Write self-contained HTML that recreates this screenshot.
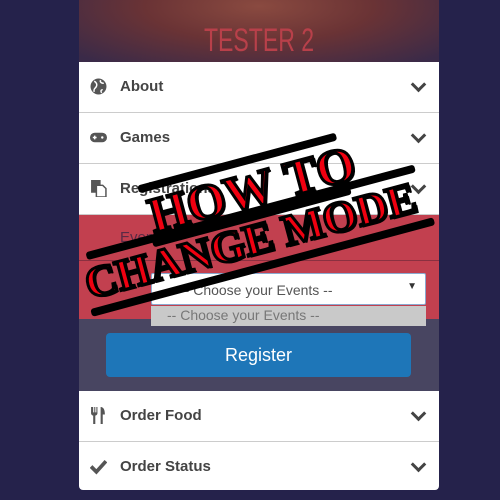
<!DOCTYPE html><html><head><style>
body{margin:0;width:500px;height:500px;background:#25224b;font-family:"Liberation Sans",sans-serif;position:relative;overflow:hidden}
.card{position:absolute;left:79px;top:0;width:360px;height:490px;background:#fff;border-radius:0 0 4px 4px;overflow:hidden}
.hdr{height:62px;background:radial-gradient(ellipse at 50% 10%,#8a4a40,#6a3335 45%,#3a2a48 95%);position:relative}
.hdr span{position:absolute;left:0;right:0;top:22px;text-align:center;color:#b8404a;font:32px "Liberation Sans Narrow","Liberation Sans",sans-serif;transform:scaleX(.72)}
.row{height:50px;border-bottom:1px solid #ccc;position:relative;color:#444;font-size:15px;font-weight:bold}
.row .t{position:absolute;left:41px;top:16px}
.row .i{position:absolute;left:11px;top:16px;width:17px;height:17px}
.row .c{position:absolute;right:15px;top:17px;width:8px;height:8px;border-right:3px solid #444;border-bottom:3px solid #444;transform:rotate(45deg)}
.red{height:104px;background:#c2404f;position:relative}
.dark{height:72px;background:#484561;position:relative}
.sel{position:absolute;left:72px;top:58px;width:275px;height:32px;box-sizing:border-box;background:#fff;border:1px solid #8aaad0;border-radius:2px;font-size:14px;color:#555;padding:8px 0 0 28px}
.opt{width:275px;height:20px;background:#c9c9c9;color:#777;font-size:14px;padding:1px 0 0 16px;box-sizing:border-box;z-index:2}
.btn{position:absolute;left:27px;top:14px;width:305px;height:44px;background:#1e76b8;border-radius:4px;color:#fff;font-size:18px;text-align:center;line-height:44px}
.stamp{position:absolute;color:#f00010;font:bold 50px "Liberation Serif",serif;-webkit-text-stroke:3px #000;white-space:nowrap;text-shadow:2px 2px 0 #000}
.bar{position:absolute;background:#000;height:8px;border-radius:3px}
</style></head><body>
<div class="card">
<div class="hdr"><span>TESTER 2</span></div>
<div class="row"><svg class="i" viewBox="0 0 16 16"><circle cx="8" cy="8" r="7.5" fill="#555"/><path d="M4 3c2 1 3 3 2 5s-3 2-2 5M10 2c-1 2 1 3 3 3M12 11c-2 0-2 2-1 3" stroke="#fff" stroke-width="1.4" fill="none"/></svg><span class="t">About</span><span class="c"></span></div>
<div class="row"><svg class="i" viewBox="0 0 18 12"><rect x="0" y="1" width="18" height="10" rx="5" fill="#555"/><path d="M3 6h4M5 4v4" stroke="#fff" stroke-width="1.5"/><circle cx="13" cy="6" r="1.3" fill="#fff"/></svg><span class="t">Games</span><span class="c"></span></div>
<div class="row"><svg class="i" viewBox="0 0 16 16"><rect x="1" y="0" width="9" height="12" fill="#555"/><path d="M6 5h6l3 3v8H6z" fill="#fff" stroke="#555" stroke-width="1.4"/></svg><span class="t">Registrations</span><span class="c"></span></div>
<div class="red"><span style="position:absolute;left:41px;top:14px;color:#5a2a45;font-size:15px">Events</span><div style="position:absolute;left:0;right:0;top:45px;border-top:1px solid #8a3040"></div>
<div class="sel">-- Choose your Events --<span style="position:absolute;right:8px;top:7px;font-size:10px;color:#333">▼</span></div></div>
<div class="opt" style="position:absolute;left:72px;top:306px">-- Choose your Events --</div>
<div class="dark"><div class="btn">Register</div></div>
<div class="row"><svg class="i" viewBox="0 0 16 16"><path d="M1 0v6c0 1 1 2 2 2v8h2V8c1 0 2-1 2-2V0H6v5H5V0H4v5H3V0z M10 0c3 0 4 3 4 7h-2v9h-2z" fill="#555"/></svg><span class="t">Order Food</span><span class="c"></span></div>
<div class="row" style="border:0"><svg class="i" viewBox="0 0 16 16"><path d="M1 8l5 5 9-10" stroke="#555" stroke-width="3.5" fill="none"/></svg><span class="t">Order Status</span><span class="c"></span></div>
</div>
<div style="position:absolute;left:0;top:0;width:500px;height:500px;z-index:5">
<div style="position:absolute;left:142px;top:158px;width:205px;height:64px;transform:rotate(-15deg)">
<div class="bar" style="left:0;top:0;width:205px"></div>
<div class="stamp" style="left:4px;top:4px">HOW&nbsp;TO</div>
<div class="bar" style="left:0;top:56px;width:205px"></div>
</div>
<div style="position:absolute;left:78px;top:208px;width:355px;height:64px;transform:rotate(-15deg)">
<div class="bar" style="left:10px;top:0;width:340px"></div>
<div class="stamp" style="left:2px;top:6px;font-size:44px">CHANGE MODE</div>
<div class="bar" style="left:0;top:56px;width:355px"></div>
</div>
</div>
</body></html>
